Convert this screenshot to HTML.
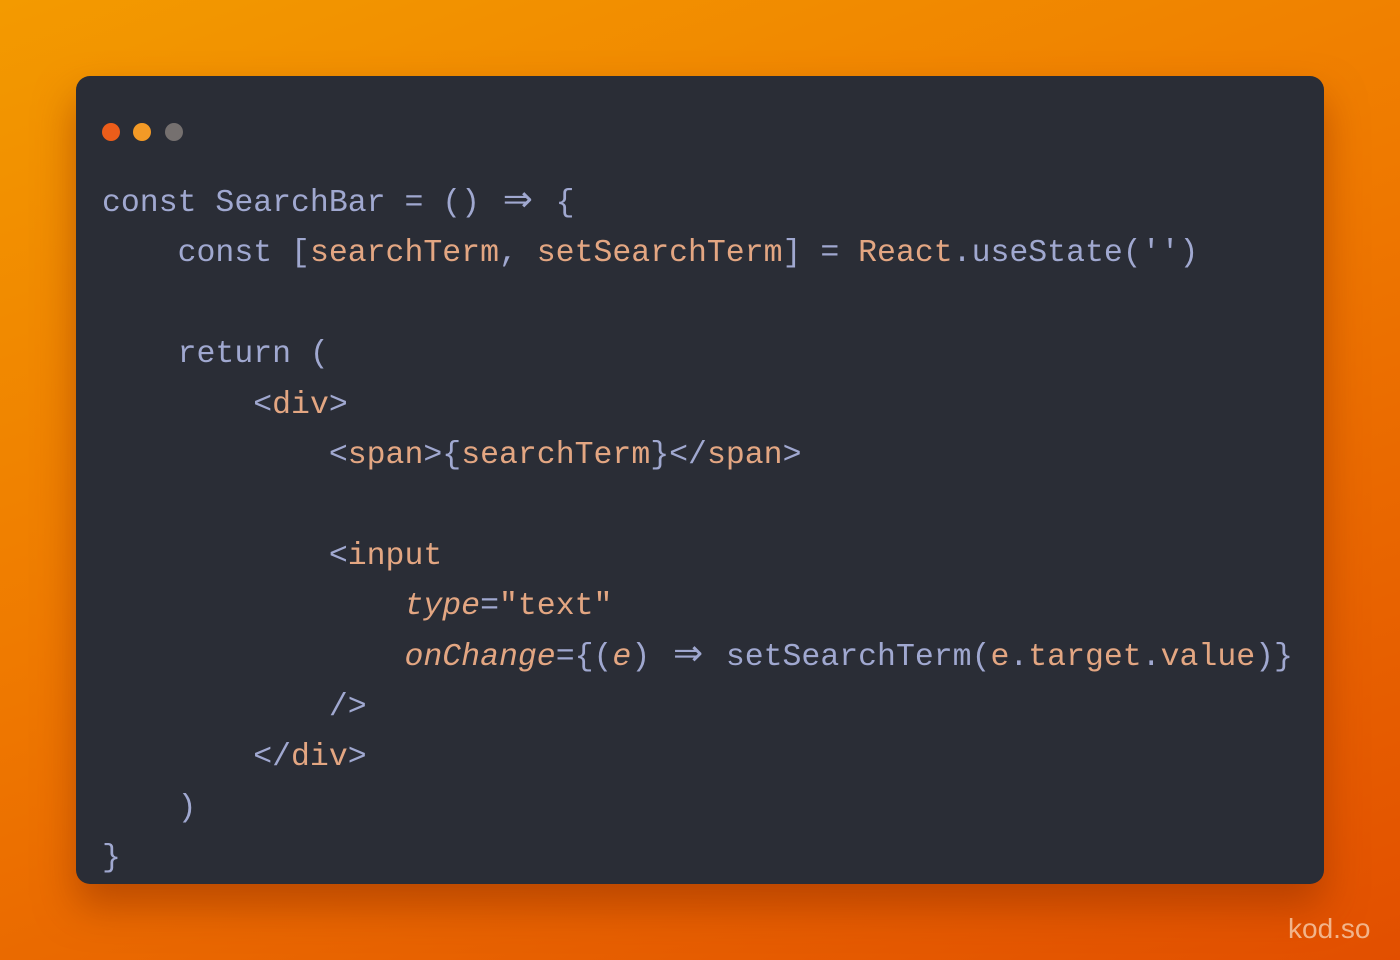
<!DOCTYPE html>
<html><head><meta charset="utf-8"><style>
html,body{margin:0;width:1400px;height:960px;overflow:hidden}
body{background:linear-gradient(160deg,#f39a00 0%,#ef7a00 45%,#e24f00 100%);position:relative;font-family:"Liberation Mono","DejaVu Sans Mono",monospace}
.card{position:absolute;left:76px;top:76px;width:1248px;height:808px;background:#2a2d36;border-radius:14px;box-shadow:0 22px 40px rgba(150,50,0,.55)}
.dot{position:absolute;top:123px;width:18px;height:18px;border-radius:50%}
pre{position:absolute;left:102px;top:179px;margin:0;font-family:inherit;font-size:31.5px;line-height:50.4px;color:#a0a8d0;white-space:pre}
.o{color:#e3a682}.i{font-style:italic;color:#e3a682}
.ar{display:inline-block;width:37.8px;text-align:center;font-family:"DejaVu Sans",sans-serif;font-size:36px;line-height:0}
.wm{position:absolute;left:1288px;top:913px;font-family:"Liberation Sans",sans-serif;font-size:28px;color:#f2b48a}
</style></head><body>
<div class="card"></div>
<div class="dot" style="left:102px;background:#ec5d1a"></div>
<div class="dot" style="left:133px;background:#f39a26"></div>
<div class="dot" style="left:165px;background:#75706f"></div>
<pre>const SearchBar = () <span class="ar">⇒</span> {
    const [<span class="o">searchTerm</span>, <span class="o">setSearchTerm</span>] = <span class="o">React</span>.useState('')

    return (
        &lt;<span class="o">div</span>&gt;
            &lt;<span class="o">span</span>&gt;{<span class="o">searchTerm</span>}&lt;/<span class="o">span</span>&gt;

            &lt;<span class="o">input</span>
                <span class="i">type</span>=<span class="o">"text"</span>
                <span class="i">onChange</span>={(<span class="i">e</span>) <span class="ar">⇒</span> setSearchTerm(<span class="o">e</span>.<span class="o">target</span>.<span class="o">value</span>)}
            /&gt;
        &lt;/<span class="o">div</span>&gt;
    )
}</pre>
<div class="wm">kod.so</div>
</body></html>
